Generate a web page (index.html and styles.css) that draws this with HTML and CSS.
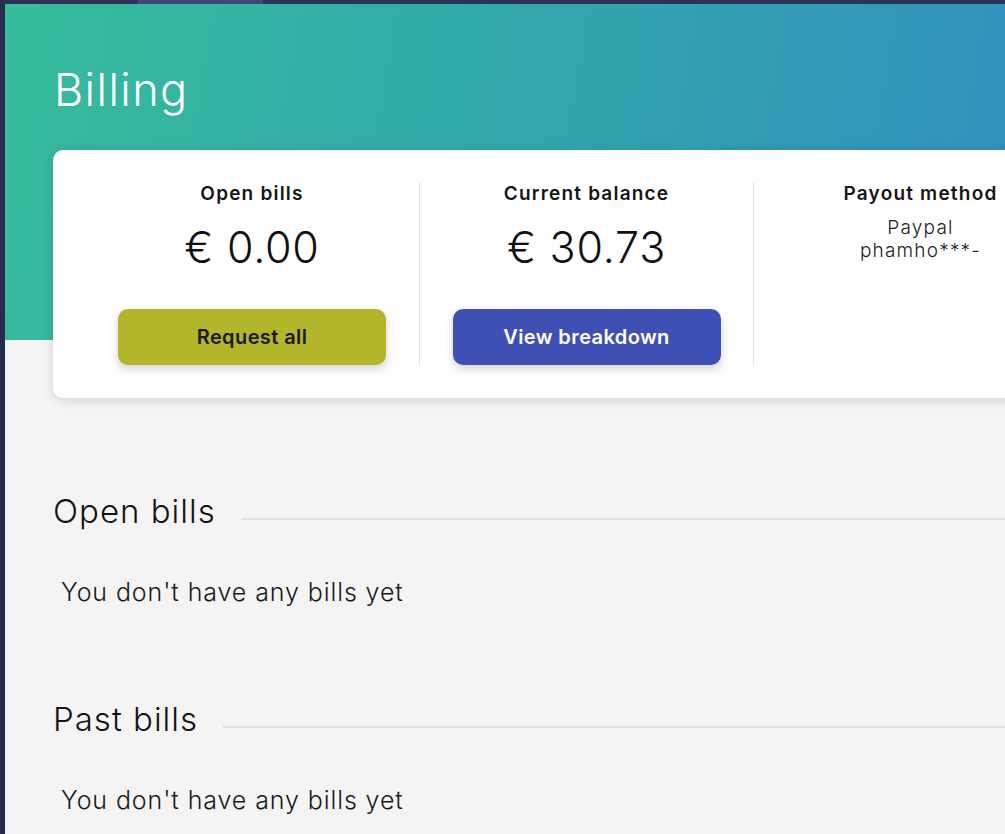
FILE: index.html
```html
<!DOCTYPE html>
<html lang="en">
<head>
<meta charset="utf-8">
<title>Billing</title>
<link rel="stylesheet" href="styles.css">
</head>
<body>
<div class="topbar"><span class="topbar-tab"></span></div>
<div class="layout">
  <aside class="rail"></aside>
  <main class="main">
    <h1 class="title">Billing</h1>
    <section class="summary">
      <div class="summary-col">
        <div class="summary-label">Open bills</div>
        <div class="summary-amount">€ 0.00</div>
        <button class="btn btn-olive">Request all</button>
      </div>
      <div class="summary-col">
        <div class="summary-label">Current balance</div>
        <div class="summary-amount">€ 30.73</div>
        <button class="btn btn-indigo">View breakdown</button>
      </div>
      <div class="summary-col">
        <div class="summary-label">Payout method</div>
        <div class="summary-value">Paypal<br>phamho***-</div>
      </div>
    </section>
    <section class="bills bills-open">
      <div class="bills-head">
        <h2 class="bills-title">Open bills</h2>
        <span class="bills-rule"></span>
      </div>
      <p class="bills-empty">You don't have any bills yet</p>
    </section>
    <section class="bills bills-past">
      <div class="bills-head">
        <h2 class="bills-title">Past bills</h2>
        <span class="bills-rule"></span>
      </div>
      <p class="bills-empty">You don't have any bills yet</p>
    </section>
  </main>
</div>
</body>
</html>
```

FILE: styles.css
```css
html, body {
  margin: 0;
  padding: 0;
}
body {
  width: 1005px;
  height: 834px;
  overflow: hidden;
  background: #f4f4f4;
  font-family: "Inter", "Lato", "Liberation Sans", sans-serif;
  color: #1a1a1a;
}
.topbar {
  height: 4px;
  background: #2a3356;
  display: flex;
}
.topbar-tab {
  margin-left: 138px;
  width: 125px;
  background: #3d4677;
}
.layout {
  display: flex;
  width: 1160px;
}
.rail {
  width: 5px;
  flex: none;
  background: #262c4f;
  min-height: 830px;
}
.main {
  flex: 1;
  padding: 58px 0 0 48px;
  background:
    linear-gradient(100deg, #36bc9b 0%, #31a4ae 50%, #3388c5 100%) top left / 100% 336px no-repeat,
    #f4f4f4;
}
.title {
  margin: 0 0 32px 1px;
  font-size: 45px;
  line-height: 56px;
  font-weight: 300;
  letter-spacing: 1.4px;
  color: #ffffff;
}
.summary {
  display: grid;
  grid-template-columns: 334px 334px 334px;
  padding: 32px 32px 33px;
  background: #ffffff;
  border-radius: 10px;
  box-shadow: 0 2px 12px rgba(0, 0, 0, 0.14);
}
.summary-col {
  height: 183px;
  display: flex;
  flex-direction: column;
  align-items: center;
}
.summary-col + .summary-col {
  border-left: 1px solid #e0e0e0;
}
.summary-label {
  font-size: 19px;
  line-height: 24px;
  font-weight: 600;
  letter-spacing: 1.2px;
  color: #161616;
}
.summary-amount {
  margin-top: 15px;
  font-size: 43px;
  line-height: 52px;
  font-weight: 300;
  letter-spacing: 0.8px;
  color: #111111;
}
.summary-value {
  margin-top: 10px;
  font-size: 19px;
  line-height: 23px;
  font-weight: 300;
  letter-spacing: 1.2px;
  text-align: center;
  color: #222222;
}
.btn {
  margin-top: auto;
  width: 268px;
  height: 56px;
  border: none;
  border-radius: 10px;
  font-family: inherit;
  font-size: 20px;
  font-weight: 600;
  letter-spacing: 0.4px;
  box-shadow: 0 4px 10px rgba(0, 0, 0, 0.18);
}
.btn-olive {
  background: #b3b52b;
  color: #1a1a1a;
}
.btn-indigo {
  background: #3f50b4;
  color: #ffffff;
}
.bills-open {
  margin-top: 93px;
}
.bills-past {
  margin-top: 92px;
}
.bills-head {
  display: flex;
  align-items: flex-start;
}
.bills-title {
  margin: 0;
  font-size: 33px;
  line-height: 40px;
  font-weight: 300;
  letter-spacing: 1px;
  color: #141414;
}
.bills-rule {
  flex: 1;
  height: 2px;
  margin: 27px 0 0 25px;
  background: #e2e2e2;
}
.bills-empty {
  margin: 46px 0 0 8px;
  font-size: 25px;
  line-height: 30px;
  font-weight: 300;
  letter-spacing: 0.9px;
  color: #1a1a1a;
}
```
